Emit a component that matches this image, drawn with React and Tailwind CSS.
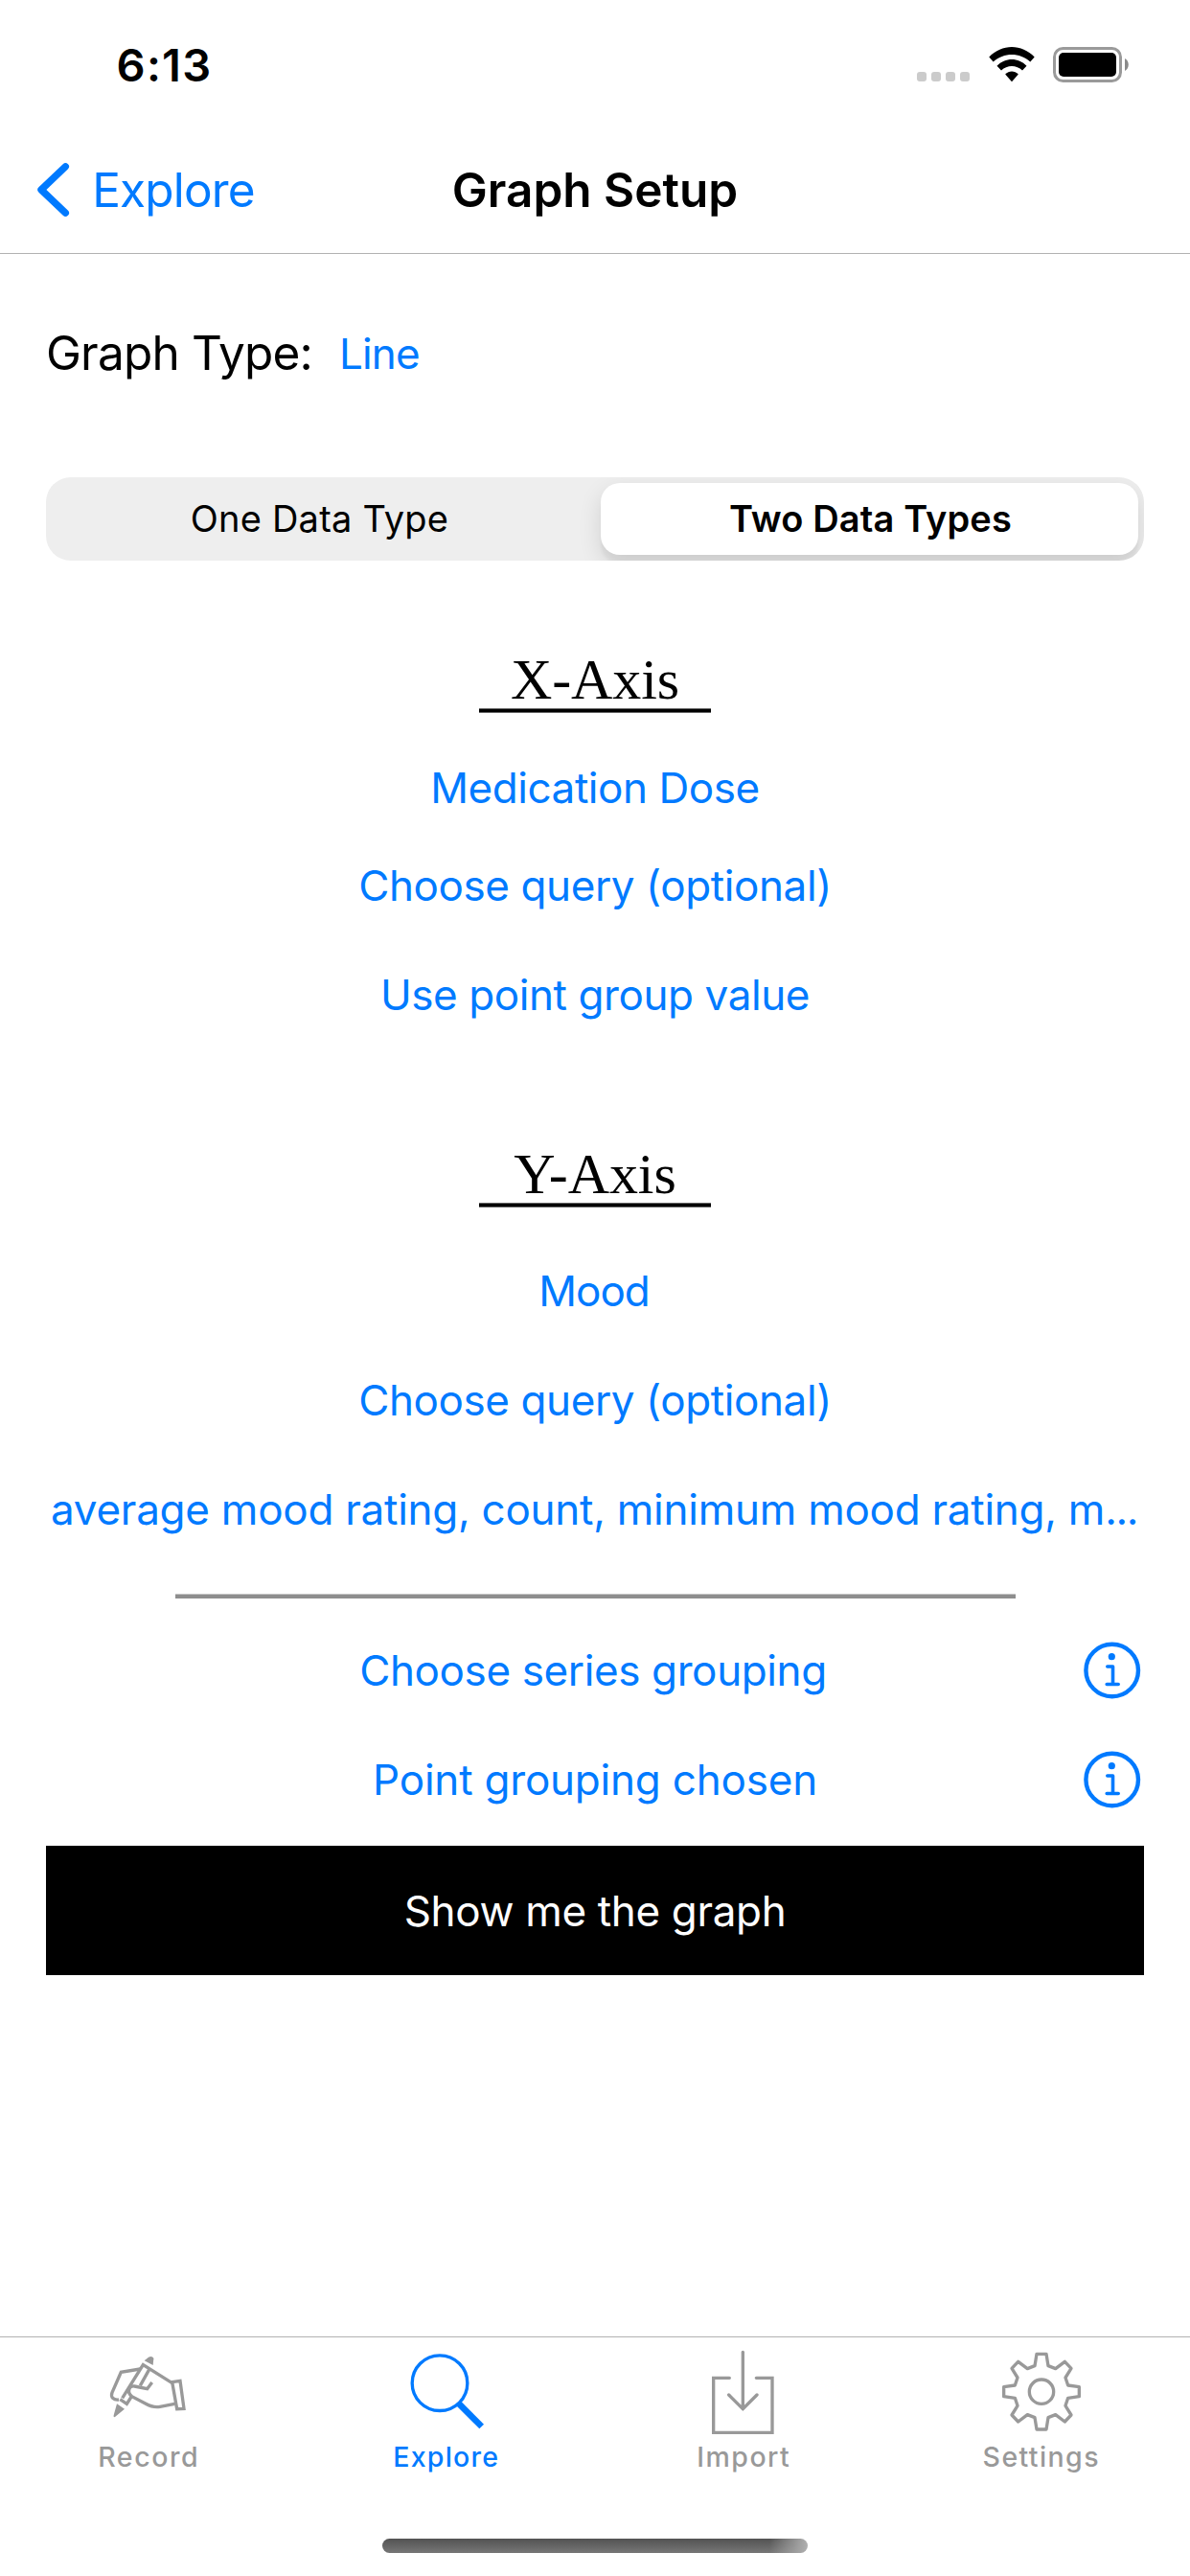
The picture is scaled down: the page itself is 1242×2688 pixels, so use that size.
import React from "react";

function StatusBar() {
  return (
    <div className="flex h-[132px] items-start justify-between pl-[121.6px] pr-[64px]">
      <span className="mt-[38px] text-[47px] font-semibold leading-[60px] tracking-[1.22px]">6:13</span>
      <div className="flex pt-[49px]">
        <div className="mr-[20px] mt-[26px] flex gap-[4.6px]">
          {[0, 1, 2, 3].map((i) => (
            <span key={i} className="h-[10px] w-[10.4px] rounded-[3px] bg-[#cbcbcb]" />
          ))}
        </div>
        <svg width="48" height="37" viewBox="0.5 0 48 37" className="mr-[19px]">
          <path d="M0.8 10.6C14-3.5 35-3.5 48.2 10.6L43.8 15.6C33 5.4 16 5.4 5.2 15.6Z" />
          <path d="M9 19.8C17.5 10.8 31.5 10.8 40 19.8L35.5 24.6C29.5 18.6 19.5 18.6 13.5 24.6Z" />
          <path d="M17.7 28.6C21.5 24.3 27.5 24.3 31.3 28.6L24.5 36.2Z" />
        </svg>
        <svg width="79" height="37" viewBox="0 0 79 37">
          <rect x="1.5" y="1.5" width="69" height="34" rx="9" fill="none" stroke="#9a9a9a" strokeWidth="3" />
          <rect x="6" y="6" width="60" height="25" rx="5" />
          <path d="M75 12C80 14.5 80 22.5 75 25Z" fill="#8a8a8a" />
        </svg>
      </div>
    </div>
  );
}

function NavBar() {
  return (
    <div className="grid h-[133px] grid-cols-[1fr_auto_1fr] items-center border-b border-[#b2b2b2]">
      <div className="flex items-center pl-[39px] text-[#007aff]">
        <svg width="34" height="58" viewBox="0 0 34 58" fill="none" stroke="currentColor" strokeWidth="7.4" strokeLinecap="round" strokeLinejoin="round">
          <path d="M29.3 4.8L4 29L29.3 53.2" />
        </svg>
        <span className="ml-[23.2px] text-[49.5px] leading-[60px] tracking-[-0.83px]">Explore</span>
      </div>
      <h1 className="text-[49.5px] font-semibold leading-[60px]">Graph Setup</h1>
    </div>
  );
}

function AxisHeading({ children }) {
  return (
    <div className="flex flex-col items-center">
      <h2 className="font-['Liberation_Serif',serif] text-[60px] leading-[60px] tracking-[-0.1px]">{children}</h2>
      <div className="h-[5px] w-[242px] border-y border-[#666] bg-black" />
    </div>
  );
}

function Choice({ className, children }) {
  return (
    <button className={`block w-full whitespace-nowrap text-center text-[44px] leading-[60px] text-[#007aff] ${className}`}>
      {children}
    </button>
  );
}

function InfoIcon() {
  return (
    <svg width="60" height="60" viewBox="0 0 60 60" fill="none" stroke="#007aff" className="absolute right-[3px] top-0">
      <circle cx="29.7" cy="30" r="27.3" strokeWidth="4.4" />
      <circle cx="29.3" cy="15.7" r="3.6" fill="#007aff" stroke="none" />
      <path d="M24.8 26H30.5V44M24.2 44.5H36.2" strokeWidth="3.6" strokeLinecap="round" strokeLinejoin="round" />
    </svg>
  );
}

function Tab({ label, viewBox, active, tracking, children }) {
  return (
    <button className={`flex flex-1 flex-col items-center ${active ? "text-[#007aff]" : "text-[#999999]"}`}>
      <svg width="90" height="92" viewBox={viewBox} fill="none" stroke="currentColor" strokeWidth="10">
        {children}
      </svg>
      <span className={`mt-[4px] text-[28.5px] font-medium leading-[36px] ${tracking}`}>{label}</span>
    </button>
  );
}

export default function App() {
  return (
    <div className="flex h-[2688px] w-[1242px] flex-col overflow-hidden bg-white font-['Inter',sans-serif] text-black">
      <StatusBar />
      <NavBar />

      <main className="flex-1 px-12">
        <div className="mt-[73px] flex h-[60px]">
          <span className="text-[49.5px] leading-[60px] tracking-[-0.82px]">Graph Type:</span>
          <button className="ml-[28px] mt-px text-[44px] leading-[60px] tracking-[-0.84px] text-[#007aff]">Line</button>
        </div>

        <div className="mt-[100px] flex h-[87px] overflow-hidden rounded-[26px] bg-[#eeeeee] p-[6px] text-[38px]">
          <button className="flex flex-1 items-center justify-center pr-[14px] tracking-[0.2px]">One Data Type</button>
          <button className="flex w-[561px] items-center justify-center rounded-[20px] bg-white pl-[2px] font-semibold tracking-[0.13px] shadow-[0_9px_24px_rgba(0,0,0,0.12),0_9px_3px_rgba(0,0,0,0.04)]">
            Two Data Types
          </button>
        </div>

        <section className="mt-[94px]">
          <AxisHeading>X-Axis</AxisHeading>
          <Choice className="mt-[48px] tracking-[-0.44px]">Medication Dose</Choice>
          <Choice className="mt-[42px] tracking-[-0.4px]">Choose query (optional)</Choice>
          <Choice className="mt-[54px] tracking-[-0.41px]">Use point group value</Choice>
        </section>

        <section className="mt-[127px]">
          <AxisHeading>Y-Axis</AxisHeading>
          <Choice className="mt-[57px] pr-[2px] tracking-[-1px]">Mood</Choice>
          <Choice className="mt-[54px] tracking-[-0.4px]">Choose query (optional)</Choice>
          <Choice className="mt-[54px] pr-[2px] tracking-[-0.25px]">
            average mood rating, count, minimum mood rating, m<span className="tracking-[-1.4px]">...</span>
          </Choice>
        </section>

        <div className="mx-auto mt-[58px] h-[5px] w-[877px] border-t border-[#c4c4c4] bg-[#8e8e8e]" />

        <div className="relative mt-[45px]">
          <Choice className="pr-[4px] tracking-[-0.38px]">Choose series grouping</Choice>
          <InfoIcon />
        </div>
        <div className="relative mt-[54px]">
          <Choice className="tracking-[-0.21px]">Point grouping chosen</Choice>
          <InfoIcon />
        </div>

        <button className="mt-[39px] flex h-[135px] w-full items-center justify-center bg-black text-[44px] tracking-[-0.34px] text-white">
          Show me the graph
        </button>
      </main>

      <nav className="flex h-[250px] flex-col items-center border-t border-[#b2b2b2]">
        <div className="flex w-full pt-[11px]">
          <Tab label="Record" viewBox="91 90 270 276" tracking="tracking-[1.6px]">
            <path d="M213 130L226 119C234 114 242 118 242 124L240 144Z" fill="currentColor" stroke="none" />
            <path d="M127 265L151 281L121 306Q115 308 117 301Z" fill="currentColor" stroke="none" />
            <path d="M200 156L140 166L112 230C106 246 118 254 133 252" />
            <path d="M144 247L209 143L300 200" />
            <path d="M228 158L200 208M174 240L158 265L137 251" />
            <path d="M300 197L325 193L337 280L315 281Z" />
            <path d="M308 265L262 274C246 277 232 273 216 264L174 242C158 230 164 207 182 210L222 218L237 198" />
          </Tab>
          <Tab label="Explore" active viewBox="92 90 270 276" tracking="tracking-[1.24px]">
            <circle cx="206" cy="200" r="86.5" />
            <path d="M264 263L337 336" strokeWidth="20" />
          </Tab>
          <Tab label="Import" viewBox="94 90 270 276" tracking="tracking-[1.5px]">
            <path d="M185 184H135V355H319V184H269M227 103V281M183 237L227 281L271 237" strokeLinecap="round" />
          </Tab>
          <Tab label="Settings" viewBox="125 90 270 276" tracking="tracking-[1.4px]">
            <path
              d="M245 109H275L281 146L304 155L333 133L353 154L335 183L343 207L378 212V242L343 247L335 271L353 300L333 321L304 299L281 308L275 345H245L239 308L216 299L187 321L167 300L185 271L177 247L142 242V212L177 207L185 183L167 154L187 133L216 155L239 146Z"
              strokeLinejoin="round"
            />
            <circle cx="260" cy="227" r="38" />
          </Tab>
        </div>
        <div className="mt-[67px] h-[15px] w-[444px] rounded-full bg-[linear-gradient(to_right,transparent_91%,#b0b0b0_100%),linear-gradient(to_bottom,#525252,#777777)]" />
      </nav>
    </div>
  );
}
